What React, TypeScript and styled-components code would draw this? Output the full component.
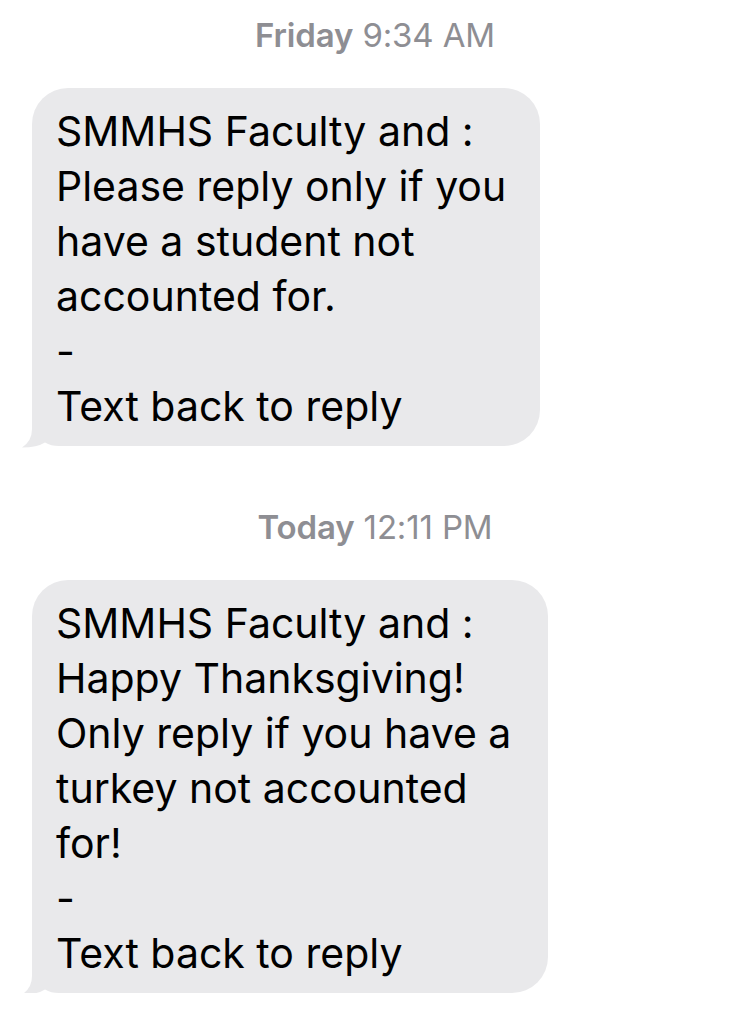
import React from "react";
import styled, { createGlobalStyle } from "styled-components";

const GlobalStyle = createGlobalStyle`
  html, body {
    margin: 0;
    padding: 0;
    background: #ffffff;
  }
  body {
    font-family: Inter, "Liberation Sans", Arial, sans-serif;
    -webkit-font-smoothing: antialiased;
  }
`;

const Thread = styled.div`
  display: flex;
  flex-direction: column;
  align-items: flex-start;
  width: 750px;
  padding: 15px 0 0 0;
  box-sizing: border-box;
`;

const Stamp = styled.div<{ $gapTop: number }>`
  align-self: center;
  margin-top: ${(p) => p.$gapTop}px;
  height: 40px;
  line-height: 40px;
  font-size: 33px;
  color: #8e8e93;
  letter-spacing: -0.15px;
  white-space: nowrap;
`;

const Day = styled.span`
  font-weight: 600;
`;

const Bubble = styled.div<{ $width: number }>`
  position: relative;
  isolation: isolate;
  margin: 33px 0 0 32px;
  width: ${(p) => p.$width}px;
  box-sizing: border-box;
  padding: 16px 0 12px 24px;
  background: #e9e9eb;
  border-radius: 36px;
  color: #000000;
  font-size: 41px;
  line-height: 55px;
  letter-spacing: 0;
  white-space: pre;
`;

const Tail = styled.svg`
  position: absolute;
  z-index: -1;
  left: -11px;
  bottom: -2px;
  width: 52px;
  height: 44px;
  display: block;
`;

const BubbleTail = () => (
  <Tail viewBox="0 0 52 44" aria-hidden="true">
    <path
      d="M11 0 H52 V42 H38 Q30 42 24 38.5 Q16 43.5 1 43.5 Q11 37 11 25 Z"
      fill="#e9e9eb"
    />
  </Tail>
);

const messages = [
  {
    day: "Friday",
    time: "9:34 AM",
    gap: 0,
    width: 508,
    text: "SMMHS Faculty and :\nPlease reply only if you\nhave a student not\naccounted for.\n-\nText back to reply",
  },
  {
    day: "Today",
    time: "12:11 PM",
    gap: 61,
    width: 516,
    text: "SMMHS Faculty and :\nHappy Thanksgiving!\nOnly reply if you have a\nturkey not accounted\nfor!\n-\nText back to reply",
  },
];

export default function App() {
  return (
    <>
      <GlobalStyle />
      <Thread>
        {messages.map((m) => (
          <React.Fragment key={m.day}>
            <Stamp $gapTop={m.gap}>
              <Day>{m.day}</Day> {m.time}
            </Stamp>
            <Bubble $width={m.width}>
              {m.text}
              <BubbleTail />
            </Bubble>
          </React.Fragment>
        ))}
      </Thread>
    </>
  );
}
